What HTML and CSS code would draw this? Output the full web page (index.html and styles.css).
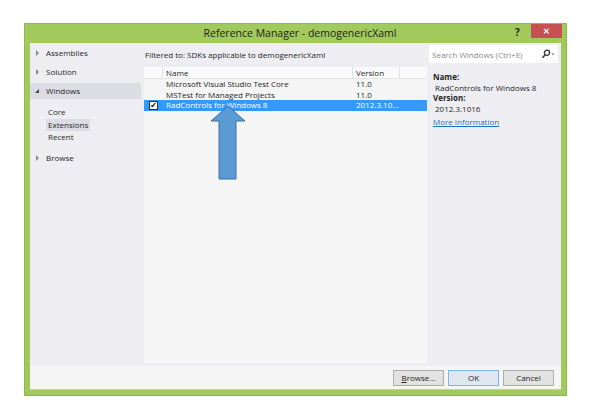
FILE: index.html
```html
<!DOCTYPE html>
<html lang="en">
<head>
  <meta charset="UTF-8" />
  <title>Reference Manager</title>
  <link rel="stylesheet" href="styles.css">
</head>
<body>
  <div class="window">
    <div class="titlebar">
      <div class="title">Reference Manager - demogenericXaml</div>
      <div class="help">?</div>
      <div class="close">&#x2715;</div>
    </div>

    <div class="client">
      <div class="main">
        <div class="nav">
          <div class="nav-item"><span class="tri closed"></span>Assemblies</div>
          <div class="nav-item"><span class="tri closed"></span>Solution</div>
          <div class="nav-item active"><span class="tri open"></span>Windows</div>
          <div class="sub">
            <div class="sub-item">Core</div>
            <div class="sub-item selected">Extensions</div>
            <div class="sub-item">Recent</div>
          </div>
          <div class="nav-item"><span class="tri closed"></span>Browse</div>
        </div>

        <div class="center">
          <div class="filter">Filtered to: SDKs applicable to demogenericXaml</div>
          <div class="list">
            <div class="row header">
              <div class="cell check"></div>
              <div class="cell name">Name</div>
              <div class="cell ver">Version</div>
              <div class="cell rest"></div>
            </div>
            <div class="row">
              <div class="cell check"></div>
              <div class="cell name">Microsoft Visual Studio Test Core</div>
              <div class="cell ver">11.0</div>
            </div>
            <div class="row">
              <div class="cell check"></div>
              <div class="cell name">MSTest for Managed Projects</div>
              <div class="cell ver">11.0</div>
            </div>
            <div class="row picked">
              <div class="cell check"><span class="box">&#x2714;</span></div>
              <div class="cell name">RadControls for Windows 8</div>
              <div class="cell ver">2012.3.10...</div>
            </div>
          </div>
        </div>

        <div class="details">
          <div class="search">
            <span class="placeholder">Search Windows (Ctrl+E)</span>
            <svg class="glass" width="14" height="10" viewBox="0 0 14 10">
              <circle cx="6" cy="3.8" r="2.6" fill="none" stroke="#333" stroke-width="1.3"/>
              <line x1="4.2" y1="5.8" x2="1.5" y2="8.8" stroke="#333" stroke-width="1.5"/>
              <path d="M10.5 4.5 L13.5 4.5 L12 6 Z" fill="#555"/>
            </svg>
          </div>
          <div class="info">
            <div class="label">Name:</div>
            <div class="value">RadControls for Windows 8</div>
            <div class="label">Version:</div>
            <div class="value">2012.3.1016</div>
            <a class="link" href="#">More Information</a>
          </div>
        </div>
      </div>

      <div class="footer">
        <button class="btn"><u>B</u>rowse...</button>
        <button class="btn default">OK</button>
        <button class="btn">Cancel</button>
      </div>
    </div>

    <svg class="arrow" width="40" height="80" viewBox="0 0 40 80">
      <path d="M18 1 L35 16 L26 16 L26 74 L9 74 L9 16 L1 16 Z" fill="#5b9bd5" stroke="#41719c" stroke-width="1"/>
    </svg>
  </div>
</body>
</html>
```

FILE: styles.css
```css
* {
  box-sizing: border-box;
}

body {
  margin: 0;
  background: #ffffff;
  font-family: 'Open Sans', 'Noto Sans', sans-serif;
  font-size: 8px;
  color: #1e1e1e;
}

.window {
  position: relative;
  margin: 23px 0 0 24px;
  width: 543px;
  height: 373px;
  background: #a1c95c;
  border: 1px solid #8fba4c;
  display: flex;
  flex-direction: column;
}

.titlebar {
  height: 19px;
  display: flex;
  align-items: flex-start;
  flex-shrink: 0;
}

.title {
  flex: 1;
  text-align: center;
  font-size: 10.5px;
  line-height: 18px;
  color: #222;
  padding-left: 60px;
}

.help {
  width: 16px;
  font-size: 10px;
  font-weight: bold;
  line-height: 14px;
  color: #222;
  margin-top: 1px;
}

.close {
  width: 31px;
  height: 14px;
  margin-right: 4px;
  background: #c75050;
  color: #fff;
  font-size: 8px;
  font-weight: bold;
  text-align: center;
  line-height: 14px;
}

.client {
  flex: 1;
  margin: 0 5px 5px 5px;
  background: #f5f5f5;
  border-bottom: 1px solid #c8c8c8;
  display: flex;
  flex-direction: column;
}

.main {
  flex: 1;
  display: flex;
  background: #eeeef2;
}

.nav {
  width: 114px;
  padding-top: 2px;
}

.nav-item {
  height: 16px;
  line-height: 16px;
  padding-left: 5px;
  margin-bottom: 3px;
  display: flex;
  align-items: center;
}

.nav-item.active {
  background: #dcdce4;
  margin-right: 3px;
}

.tri {
  width: 0;
  height: 0;
}

.tri.closed {
  border-top: 3px solid transparent;
  border-bottom: 3px solid transparent;
  border-left: 3px solid #8a8a8a;
  margin-left: 1px;
  margin-right: 7px;
}

.tri.open {
  border-left: 4px solid transparent;
  border-bottom: 4px solid #444;
  margin-right: 7px;
}

.sub {
  padding: 4px 0 6px 16px;
}

.sub-item {
  display: table;
  height: 12.5px;
  line-height: 12.5px;
  padding-left: 2px;
}

.sub-item.selected {
  background: #dcdce4;
  padding-right: 2px;
}

.center {
  flex: 1;
  display: flex;
  flex-direction: column;
  padding-bottom: 3px;
}

.filter {
  height: 24px;
  line-height: 24px;
  padding-left: 1px;
  background: #eeeef2;
}

.list {
  flex: 1;
  background: #f5f5f5;
}

.row {
  display: flex;
  height: 10.5px;
  line-height: 10.5px;
}

.row.header {
  height: 12px;
  line-height: 11px;
  background: #fafafa;
  border-bottom: 1px solid #e6e6e6;
}

.row.header .cell {
  border-right: 1px solid #e2e2e2;
}

.cell.check {
  width: 19px;
  display: flex;
  align-items: center;
  justify-content: center;
}

.cell.name {
  width: 190px;
  padding-left: 3px;
  white-space: nowrap;
}

.cell.ver {
  width: 47px;
  padding-left: 3px;
  white-space: nowrap;
}

.cell.rest {
  flex: 1;
  border-right: none !important;
}

.row.picked {
  background: #3399ff;
  color: #ffffff;
}

.box {
  width: 9px;
  height: 9px;
  background: #fff;
  border: 1px solid #333;
  color: #111;
  font-size: 8px;
  line-height: 7px;
  text-align: center;
  font-family: 'DejaVu Sans', sans-serif;
}

.details {
  width: 134px;
  padding: 2px 3px 0 2px;
}

.search {
  height: 18px;
  background: #fff;
  display: flex;
  align-items: center;
  padding-left: 3px;
}

.placeholder {
  flex: 1;
  color: #8a8a8a;
}

.glass {
  margin-right: 3px;
}

.info {
  padding: 9px 0 0 4px;
  line-height: 10.5px;
}

.label {
  font-weight: bold;
}

.value {
  padding-left: 2px;
}

.link {
  display: inline-block;
  margin-top: 3px;
  color: #1e6fc8;
  text-decoration: underline;
}

.footer {
  height: 23px;
  display: flex;
  justify-content: flex-end;
  align-items: center;
  gap: 4px;
  padding-right: 7px;
}

.btn {
  width: 51px;
  height: 16px;
  padding: 0;
  font-family: 'Open Sans', 'Noto Sans', sans-serif;
  font-size: 8px;
  color: #222;
  background: #e2e2e2;
  border: 1px solid #acacac;
}

.btn.default {
  border-color: #7eb4ea;
  background: #e0e6ee;
}

.arrow {
  position: absolute;
  left: 185px;
  top: 81px;
}
```
